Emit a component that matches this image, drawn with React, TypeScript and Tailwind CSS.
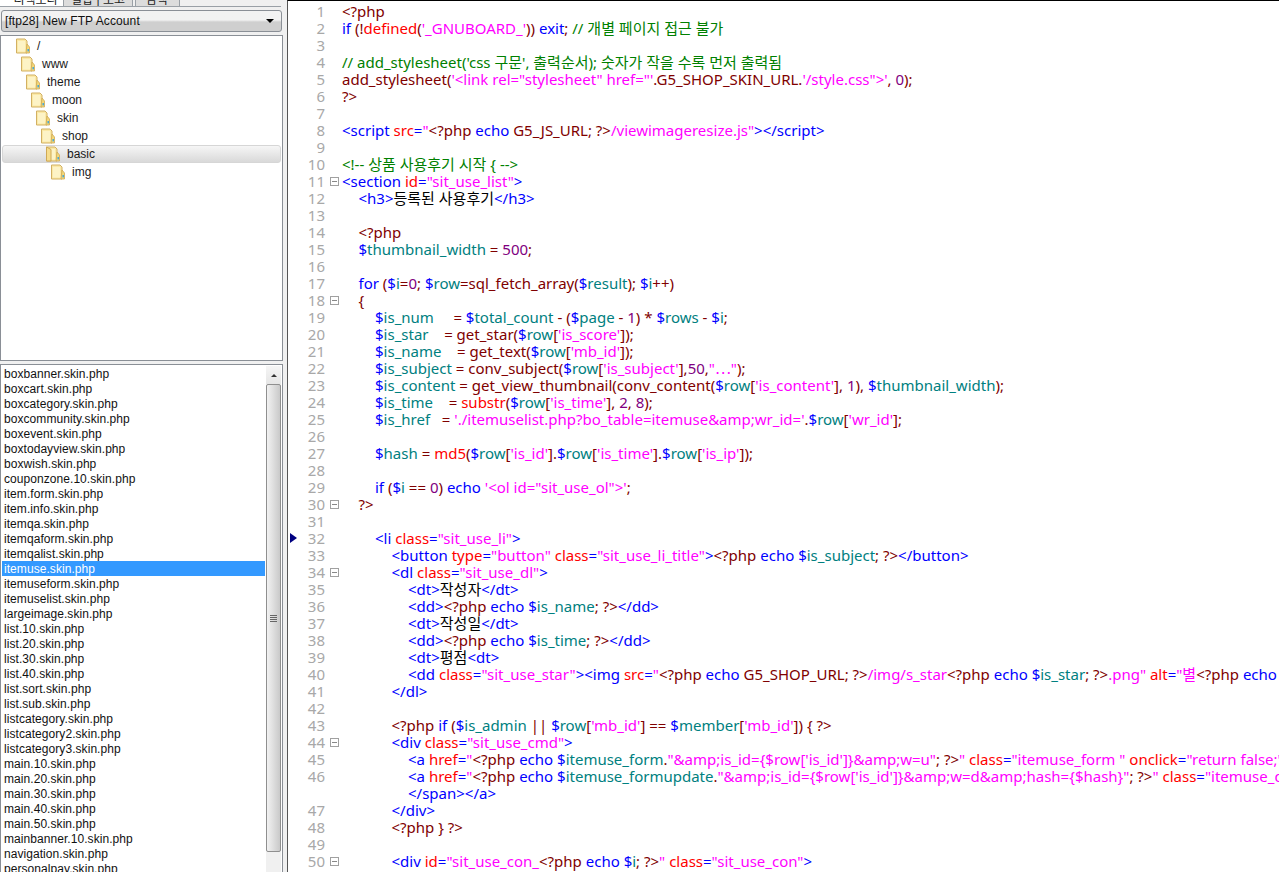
import React from "react";

const colors: Record<string, string> = {
  p: "text-[#800000]",
  b: "text-[#0000ff]",
  r: "text-[#ff0000]",
  m: "text-[#ff00ff]",
  g: "text-[#008000]",
  t: "text-[#008080]",
  k: "text-[#000000]",
  u: "text-[#800080]",
};

const indents: Record<number, string> = {
  0: "pl-0",
  1: "pl-[16.5px]",
  2: "pl-[33px]",
  3: "pl-[49.5px]",
  4: "pl-[66px]",
};

const PO = "§p<?php ";
const PC = "§p?>";
const ECHO = PO + "§becho ";
const V = (n: string) => "§b$§t" + n;

type Line = { n?: number; i?: number; fold?: boolean; s?: string; mark?: boolean };

const code: Line[] = [
  { n: 1, s: "§p<?php" },
  { n: 2, s: "§bif §p(!§rdefined§p(§m'_GNUBOARD_'§p)) §bexit§p; §g// 개별 페이지 접근 불가" },
  { n: 3 },
  { n: 4, s: "§g// add_stylesheet('css 구문', 출력순서); 숫자가 작을 수록 먼저 출력됨" },
  { n: 5, s: "§padd_stylesheet(§m'<link rel=\"stylesheet\" href=\"'§p.G5_SHOP_SKIN_URL.§m'/style.css\">'§p, §u0§p);" },
  { n: 6, s: "§p?>" },
  { n: 7 },
  { n: 8, s: "§b<script §rsrc§b=§m\"" + ECHO + "§pG5_JS_URL; " + PC + "§m/viewimageresize.js\"§b></script>" },
  { n: 9 },
  { n: 10, s: "§g<!-- 상품 사용후기 시작 { -->" },
  { n: 11, fold: true, s: "§b<section §rid§b=§m\"sit_use_list\"§b>" },
  { n: 12, i: 1, s: "§b<h3>§k등록된 사용후기§b</h3>" },
  { n: 13 },
  { n: 14, i: 1, s: "§p<?php" },
  { n: 15, i: 1, s: V("thumbnail_width") + " §p= §u500§p;" },
  { n: 16 },
  { n: 17, i: 1, s: "§bfor §p(" + V("i") + "§p=§u0§p; " + V("row") + "§p=sql_fetch_array(" + V("result") + "§p); " + V("i") + "§p++)" },
  { n: 18, i: 1, fold: true, s: "§p{" },
  { n: 19, i: 2, s: V("is_num") + "     §p= " + V("total_count") + " §p- (" + V("page") + " §p- §u1§p) * " + V("rows") + " §p- " + V("i") + "§p;" },
  { n: 20, i: 2, s: V("is_star") + "    §p= get_star(" + V("row") + "§p[§m'is_score'§p]);" },
  { n: 21, i: 2, s: V("is_name") + "    §p= get_text(" + V("row") + "§p[§m'mb_id'§p]);" },
  { n: 22, i: 2, s: V("is_subject") + " §p= conv_subject(" + V("row") + "§p[§m'is_subject'§p],§u50§p,§m\"⋯\"§p);" },
  { n: 23, i: 2, s: V("is_content") + " §p= get_view_thumbnail(conv_content(" + V("row") + "§p[§m'is_content'§p], §u1§p), " + V("thumbnail_width") + "§p);" },
  { n: 24, i: 2, s: V("is_time") + "    §p= §rsubstr§p(" + V("row") + "§p[§m'is_time'§p], §u2§p, §u8§p);" },
  { n: 25, i: 2, s: V("is_href") + "   §p= §m'./itemuselist.php?bo_table=itemuse&amp;wr_id='§p." + V("row") + "§p[§m'wr_id'§p];" },
  { n: 26 },
  { n: 27, i: 2, s: V("hash") + " §p= §rmd5§p(" + V("row") + "§p[§m'is_id'§p]." + V("row") + "§p[§m'is_time'§p]." + V("row") + "§p[§m'is_ip'§p]);" },
  { n: 28 },
  { n: 29, i: 2, s: "§bif §p(" + V("i") + " §p== §u0§p) §becho §m'<ol id=\"sit_use_ol\">'§p;" },
  { n: 30, i: 1, fold: true, s: "§p?>" },
  { n: 31 },
  { n: 32, i: 2, mark: true, s: "§b<li §rclass§b=§m\"sit_use_li\"§b>" },
  { n: 33, i: 3, s: "§b<button §rtype§b=§m\"button\" §rclass§b=§m\"sit_use_li_title\"§b>" + ECHO + V("is_subject") + "§p; " + PC + "§b</button>" },
  { n: 34, i: 3, fold: true, s: "§b<dl §rclass§b=§m\"sit_use_dl\"§b>" },
  { n: 35, i: 4, s: "§b<dt>§k작성자§b</dt>" },
  { n: 36, i: 4, s: "§b<dd>" + ECHO + V("is_name") + "§p; " + PC + "§b</dd>" },
  { n: 37, i: 4, s: "§b<dt>§k작성일§b</dt>" },
  { n: 38, i: 4, s: "§b<dd>" + ECHO + V("is_time") + "§p; " + PC + "§b</dd>" },
  { n: 39, i: 4, s: "§b<dt>§k평점§b<dt>" },
  { n: 40, i: 4, s: "§b<dd §rclass§b=§m\"sit_use_star\"§b><img §rsrc§b=§m\"" + ECHO + "§pG5_SHOP_URL; " + PC + "§m/img/s_star" + ECHO + V("is_star") + "§p; " + PC + "§m.png\" §ralt§b=§m\"별" + ECHO + V("is_star") + "§p; " + PC },
  { n: 41, i: 3, s: "§b</dl>" },
  { n: 42 },
  { n: 43, i: 3, s: PO + "§bif §p(" + V("is_admin") + " §p|| " + V("row") + "§p[§m'mb_id'§p] == " + V("member") + "§p[§m'mb_id'§p]) { ?>" },
  { n: 44, i: 3, fold: true, s: "§b<div §rclass§b=§m\"sit_use_cmd\"§b>" },
  { n: 45, i: 4, s: "§b<a §rhref§b=§m\"" + ECHO + V("itemuse_form") + "§p.§m\"&amp;is_id={$row['is_id']}&amp;w=u\"§p; " + PC + "§m\" §rclass§b=§m\"itemuse_form \" §ronclick§b=§m\"return false;\"§b>" },
  { n: 46, i: 4, s: "§b<a §rhref§b=§m\"" + ECHO + V("itemuse_formupdate") + "§p.§m\"&amp;is_id={$row['is_id']}&amp;w=d&amp;hash={$hash}\"§p; " + PC + "§m\" §rclass§b=§m\"itemuse_delete\"§b>" },
  { i: 4, s: "§b</span></a>" },
  { n: 47, i: 3, s: "§b</div>" },
  { n: 48, i: 3, s: PO + "§p} ?>" },
  { n: 49 },
  { n: 50, i: 3, fold: true, s: "§b<div §rid§b=§m\"sit_use_con_" + ECHO + V("i") + "§p; " + PC + "§m\" §rclass§b=§m\"sit_use_con\"§b>" },
];

function Tokens({ s }: { s: string }) {
  const parts = s.split("§").filter(Boolean);
  return (
    <>
      {parts.map((p, i) => (
        <span key={i} className={colors[p[0]]}>
          {p.slice(1)}
        </span>
      ))}
    </>
  );
}

const files = [
  "boxbanner.skin.php", "boxcart.skin.php", "boxcategory.skin.php", "boxcommunity.skin.php", "boxevent.skin.php",
  "boxtodayview.skin.php", "boxwish.skin.php", "couponzone.10.skin.php", "item.form.skin.php", "item.info.skin.php",
  "itemqa.skin.php", "itemqaform.skin.php", "itemqalist.skin.php", "itemuse.skin.php", "itemuseform.skin.php",
  "itemuselist.skin.php", "largeimage.skin.php", "list.10.skin.php", "list.20.skin.php", "list.30.skin.php",
  "list.40.skin.php", "list.sort.skin.php", "list.sub.skin.php", "listcategory.skin.php", "listcategory2.skin.php",
  "listcategory3.skin.php", "main.10.skin.php", "main.20.skin.php", "main.30.skin.php", "main.40.skin.php",
  "main.50.skin.php", "mainbanner.10.skin.php", "navigation.skin.php", "personalpay.skin.php",
];

const tree = [
  { name: "/", pad: "pl-[15px]" },
  { name: "www", pad: "pl-[20px]" },
  { name: "theme", pad: "pl-[25px]" },
  { name: "moon", pad: "pl-[30px]" },
  { name: "skin", pad: "pl-[35px]" },
  { name: "shop", pad: "pl-[40px]" },
  { name: "basic", pad: "pl-[43px]", selected: true },
  { name: "img", pad: "pl-[50px]" },
];

function Folder({ open }: { open?: boolean }) {
  return (
    <svg width="15" height="16" viewBox="0 0 15 16" className="shrink-0">
      <path d="M0.5 1 H9 L11 3 V15 H0.5 Z" fill="#fbe9a6" stroke="#d2b063" />
      <path d="M2 3 H9 V13.5 H2 Z" fill="#fdf3c6" />
      <path d="M11 6 L13.5 9 V15 H10 Z" fill="#f4d878" stroke="#cfa955" strokeWidth="0.8" />
      <rect x="11.5" y="11" width="1.4" height="2.4" fill="#3aa3dc" />
      {open && <path d="M0.5 1 L5 3.5 V15 H0.5 Z" fill="#f7dd8d" stroke="#cfa955" />}
    </svg>
  );
}

export default function App() {
  return (
    <div className="flex h-[872px] w-[1279px] overflow-hidden bg-[#f0f0f0] font-['Liberation_Sans','Noto_Sans_CJK_KR',sans-serif]">
      {/* Left panel */}
      <div className="flex w-[283px] shrink-0 flex-col">
        <div className="flex h-[7px] w-[281px] shrink-0 items-end overflow-hidden border-b border-[#9aa0a6] bg-[#f0f0f0] text-[12px] leading-[12px] text-[#222]">
          <div className="flex h-[7px] w-[63px] items-end justify-center overflow-hidden bg-white pl-[8px]">
            <span className="whitespace-nowrap">디렉토리</span>
          </div>
          <div className="flex h-[6px] w-[70px] items-end justify-center overflow-hidden border-x border-[#9aa0a6] bg-[#dcdcdc]">
            <span className="whitespace-nowrap">결합 | 보고</span>
          </div>
          <div className="ml-[2px] flex h-[6px] w-[45px] items-end justify-center overflow-hidden border-x border-[#9aa0a6] bg-[#dcdcdc] pr-[2px]">
            <span className="whitespace-nowrap">검색</span>
          </div>
        </div>
        <div className="mx-[1px] mt-[3px] flex h-[22px] w-[281px] shrink-0 items-center justify-between rounded-[3px] border border-[#8a8f96] bg-gradient-to-b from-[#f2f2f2] from-45% to-[#cfcfcf] to-55% pl-[3px] pr-[2px] text-[12px] tracking-[0.1px] text-[#111]">
          <span>[ftp28] New FTP Account</span>
          <span className="mr-[5px] h-0 w-0 border-x-[4px] border-t-[4px] border-x-transparent border-t-black" />
        </div>
        <div className="mt-[3px] h-[326px] w-[283px] shrink-0 border border-[#8a8f96] bg-white pt-[1px] text-[12px] text-[#1a1a1a]">
          {tree.map((t) => (
            <div
              key={t.name}
              className={"flex h-[18px] items-center gap-[6px] rounded-[3px] " + t.pad + (t.selected ? " mx-[1px] border border-[#d6d6d6] bg-gradient-to-b from-[#f6f6f6] to-[#d9d9d9]" : "")}
            >
              <Folder open={t.selected} />
              <span>{t.name}</span>
            </div>
          ))}
        </div>
        <div className="mt-[3px] flex min-h-0 flex-1 overflow-hidden border border-b-0 border-[#8a8f96] bg-white pt-[1px] text-[12px] tracking-[0.06px] text-[#111]">
          <div className="ml-[1px] mr-[1px] min-w-0 flex-1 overflow-hidden">
            {files.map((f) => (
              <div key={f} className={"h-[15px] pl-[2px] leading-[16px] whitespace-nowrap " + (f === "itemuse.skin.php" ? "bg-[#3399ff] text-white" : "")}>
                {f}
              </div>
            ))}
          </div>
          <div className="mr-[1px] flex w-[15px] shrink-0 flex-col bg-[#f0f0f0]">
            <div className="flex h-[18px] shrink-0 items-center justify-center bg-gradient-to-b from-[#f5f5f5] to-[#e6e6e6]">
              <span className="h-0 w-0 border-x-[3px] border-b-[3px] border-x-transparent border-b-[#333]" />
            </div>
            <div className="flex h-[468px] shrink-0 flex-col items-center justify-center rounded-[2px] border border-[#8f8f8f] bg-gradient-to-r from-[#f2f2f2] to-[#c9c9c9]">
              <span className="mb-[1px] h-px w-[7px] bg-[#666]" />
              <span className="mb-[1px] h-px w-[7px] bg-[#666]" />
              <span className="mb-[1px] h-px w-[7px] bg-[#666]" />
              <span className="h-px w-[7px] bg-[#666]" />
            </div>
          </div>
        </div>
      </div>

      {/* Splitter */}
      <div className="w-[4px] shrink-0 bg-[#f0f0f0]" />

      {/* Editor */}
      <div className="min-w-0 flex-1 overflow-hidden border-l border-t border-l-[#555] border-t-black bg-white pt-[2px] font-['Noto_Sans','Noto_Sans_CJK_KR',sans-serif] text-[15px] leading-[17px]">
        {code.map((l, idx) => (
          <div key={idx} className="relative flex h-[17px] whitespace-pre">
            {l.mark && (
              <span className="absolute left-[2px] top-[3px] h-0 w-0 border-y-[5px] border-l-[7px] border-y-transparent border-l-[#000080]" />
            )}
            <span className="w-[37px] shrink-0 text-right text-[#a8a8a8]">{l.n ?? ""}</span>
            <span className="flex w-[17px] shrink-0 items-center justify-center pl-[1px]">
              {l.fold && (
                <span className="flex h-[9px] w-[9px] items-center justify-center border border-[#a0a0a0]">
                  <span className="h-px w-[5px] bg-[#888]" />
                </span>
              )}
            </span>
            <span className={indents[l.i ?? 0]}>{l.s ? <Tokens s={l.s} /> : null}</span>
          </div>
        ))}
      </div>
    </div>
  );
}
